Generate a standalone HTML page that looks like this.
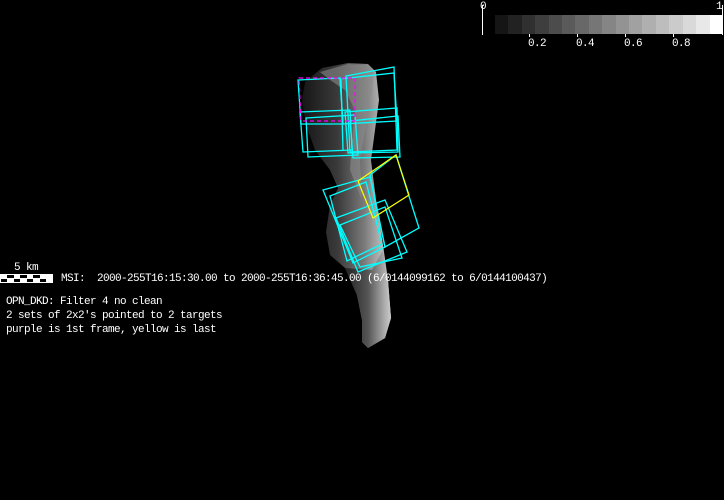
<!DOCTYPE html>
<html><head><meta charset="utf-8"><style>
html,body{margin:0;padding:0;background:#000;width:724px;height:500px;overflow:hidden}
.t{position:absolute;color:#fff;font-family:"Liberation Mono","DejaVu Sans Mono",monospace;font-size:11px;letter-spacing:-0.6px;line-height:14px;white-space:pre}
</style></head><body>
<svg width="724" height="500" style="position:absolute;left:0;top:0">
<defs>
<linearGradient id="g" x1="0" y1="0" x2="1" y2="0">
<stop offset="0" stop-color="#161616"/><stop offset="0.4" stop-color="#3a3a3a"/><stop offset="0.7" stop-color="#7a7a7a"/><stop offset="0.9" stop-color="#bbb"/><stop offset="1" stop-color="#d8d8d8"/>
</linearGradient>
<linearGradient id="g2" x1="0" y1="0" x2="1" y2="0">
<stop offset="0" stop-color="#222"/><stop offset="0.5" stop-color="#555"/><stop offset="0.85" stop-color="#aaa"/><stop offset="1" stop-color="#ccc"/>
</linearGradient>
</defs>
<path d="M305,82 L322,68 L348,63 L368,64 L376,72 L379,100 L375,130 L371,160 L376,200 L383,245 L388,280 L391,318 L385,338 L368,348 L362,342 L362,320 L357,295 L345,268 L330,255 L326,232 L330,205 L338,188 L330,170 L315,150 L306,125 L302,100 Z" fill="url(#g)"/>
<path d="M345,268 L357,295 L362,320 L362,342 L368,348 L385,338 L391,318 L388,280 L383,250 L372,270 Z" fill="url(#g2)"/>
<path d="M320,72 L348,64 L368,65 L374,72 L372,90 L365,130 L360,160 L362,200 L358,190 L350,170 L352,140 L355,110 L345,90 L330,80 Z" fill="#8a8a8a" opacity="0.6"/>
<g fill="none" stroke="#0ff" stroke-width="1.3">
<polygon points="298,80 340,78 343,124 301,124"/>
<polygon points="340,79 394,73 397,121 343,124"/>
<polygon points="346,76 394,67 397,150 350,152"/>
<polygon points="300,112 350,110 352,150 303,152"/>
<polygon points="306,118 355,115 358,155 308,157"/>
<polygon points="345,112 397,108 398,152 348,153"/>
<polygon points="350,121 398,116 400,157 353,158"/>
<line x1="341" y1="80" x2="343" y2="150"/>
<polygon points="323,190 370,177 385,247 353,263"/>
<polygon points="330,196 366,182 382,244 347,261"/>
<polygon points="336,218 385,200 407,252 358,272"/>
<polygon points="340,225 385,207 402,258 360,267"/>
<polygon points="370,175 396,155 419,228 385,247"/>
</g>
<polyline points="358,181 396,155 409,195 373,218 358,181" fill="none" stroke="#ff0" stroke-width="1.2"/>
<polygon points="299,78 355,78 355,121 301,121" fill="none" stroke="#f0f" stroke-width="1.2" stroke-dasharray="4,3"/>
<line x1="482.5" y1="5" x2="482.5" y2="35" stroke="#fff"/>
<line x1="722.5" y1="5" x2="722.5" y2="35" stroke="#fff"/>
<g stroke="#fff"><line x1="529.5" y1="33" x2="529.5" y2="37"/><line x1="577.5" y1="33" x2="577.5" y2="37"/><line x1="625.5" y1="33" x2="625.5" y2="37"/><line x1="673.5" y1="33" x2="673.5" y2="37"/></g>
<rect x="0" y="274" width="53" height="9" fill="#fff"/>
<g fill="#000"><rect x="7" y="275" width="7" height="3"/><rect x="20" y="275" width="7" height="3"/><rect x="33" y="275" width="7" height="3"/><rect x="1" y="279" width="6" height="3"/><rect x="14" y="279" width="6" height="3"/><rect x="27" y="279" width="6" height="3"/><rect x="40" y="279" width="6" height="3"/></g>
</svg>
<div style="position:absolute;left:495px;top:15px;width:228px;height:19px;display:flex">
<div style="flex:1;background:#151515"></div><div style="flex:1;background:#222"></div><div style="flex:1;background:#303030"></div><div style="flex:1;background:#3e3e3e"></div><div style="flex:1;background:#4c4c4c"></div><div style="flex:1;background:#5a5a5a"></div><div style="flex:1;background:#686868"></div><div style="flex:1;background:#767676"></div><div style="flex:1;background:#858585"></div><div style="flex:1;background:#939393"></div><div style="flex:1;background:#a1a1a1"></div><div style="flex:1;background:#afafaf"></div><div style="flex:1;background:#bdbdbd"></div><div style="flex:1;background:#cbcbcb"></div><div style="flex:1;background:#d9d9d9"></div><div style="flex:1;background:#e8e8e8"></div><div style="flex:1;background:#fff"></div>
</div>
<div class="t" style="left:480px;top:0px">0</div>
<div class="t" style="left:716px;top:0px">1</div>
<div class="t" style="left:528px;top:37px">0.2</div>
<div class="t" style="left:576px;top:37px">0.4</div>
<div class="t" style="left:624px;top:37px">0.6</div>
<div class="t" style="left:672px;top:37px">0.8</div>
<div class="t" style="left:14px;top:261px">5 km</div>
<div class="t" style="left:61px;top:272px">MSI:  2000-255T16:15:30.00 to 2000-255T16:36:45.00 (6/0144099162 to 6/0144100437)</div>
<div class="t" style="left:6px;top:295px">OPN_DKD: Filter 4 no clean
2 sets of 2x2's pointed to 2 targets
purple is 1st frame, yellow is last</div>
</body></html>
